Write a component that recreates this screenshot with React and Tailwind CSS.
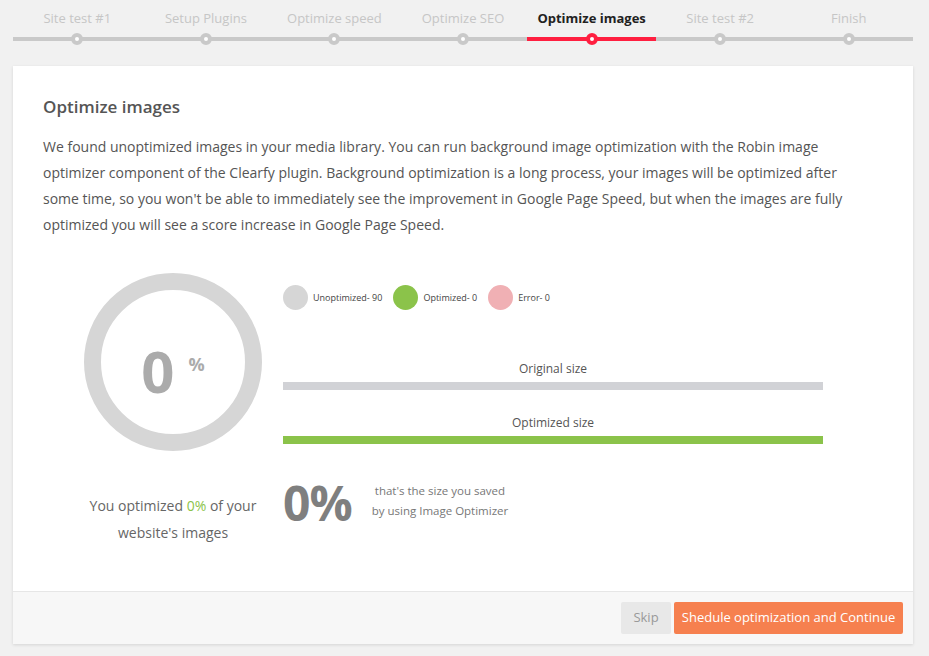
import React from "react";

const steps = ["Site test #1", "Setup Plugins", "Optimize speed", "Optimize SEO", "Optimize images", "Site test #2", "Finish"];
const ACTIVE = 4;

function Step({ label, active }) {
  return (
    <div className="flex-1 flex flex-col items-center">
      <div className={`h-[22px] text-[13px] leading-[18px] pt-[9px] box-content ${active ? "font-bold text-[#222]" : "text-[#c6c6c6]"}`}>{label}</div>
      <div className="relative w-full h-[16px] flex items-center">
        <div className={`w-full h-[4px] ${active ? "bg-[#ff1f40]" : "bg-[#c9c9c9]"}`} />
        <div className={`absolute left-1/2 top-1/2 -translate-x-1/2 -translate-y-1/2 w-[12px] h-[12px] rounded-full bg-white border-[4px] ${active ? "border-[#ff1f40]" : "border-[#c9c9c9]"}`} />
      </div>
    </div>
  );
}

export default function App() {
  return (
    <div className="w-[929px] h-[656px] bg-[#f1f1f1] overflow-hidden" style={{ fontFamily: '"Open Sans", "Noto Sans", sans-serif' }}>
      <div className="ml-[13px] w-[900px] flex">
        {steps.map((s, i) => (
          <Step key={s} label={s} active={i === ACTIVE} />
        ))}
      </div>
      <div className="ml-[13px] w-[900px] mt-[19px] bg-white shadow-[0_1px_3px_rgba(0,0,0,0.12)]">
        <div className="px-[30px] pt-[29px] h-[525px]">
          <h2 className="text-[17px] font-semibold text-[#555] leading-[24px]">Optimize images</h2>
          <p className="mt-[15px] text-[14px] leading-[26px] text-[#555]">
            We found unoptimized images in your media library. You can run background image optimization with the Robin image<br />
            optimizer component of the Clearfy plugin. Background optimization is a long process, your images will be optimized after<br />
            some time, so you won't be able to immediately see the improvement in Google Page Speed, but when the images are fully<br />
            optimized you will see a score increase in Google Page Speed.
          </p>
          <div className="flex mt-[35px]">
            <div className="w-[240px] flex flex-col items-center">
              <div className="ml-[20px] w-[178px] h-[178px] rounded-full border-[17px] border-[#d6d6d6] flex items-center justify-center">
                <div className="flex items-center mt-[18px]">
                  <span className="text-[58px] font-bold text-[#ababab] leading-[58px]">0</span>
                  <span className="text-[18px] font-bold text-[#ababab] ml-[14px] -mt-[14px] leading-[20px]">%</span>
                </div>
              </div>
              <div className="ml-[20px] mt-[41px] text-center text-[14px] leading-[27px] text-[#666]">
                You optimized <span className="text-[#8bc34a]">0%</span> of your<br />website's images
              </div>
            </div>
            <div className="w-[540px]">
              <div className="flex items-center h-[25px] mt-[12px]">
                <span className="w-[25px] h-[25px] rounded-full bg-[#d6d6d6]" />
                <span className="ml-[5px] text-[9px] text-[#444]">Unoptimized- 90</span>
                <span className="ml-[11px] w-[25px] h-[25px] rounded-full bg-[#8bc34a]" />
                <span className="ml-[5px] text-[9px] text-[#444]">Optimized- 0</span>
                <span className="ml-[11px] w-[25px] h-[25px] rounded-full bg-[#f0b0b4]" />
                <span className="ml-[5px] text-[9px] text-[#444]">Error- 0</span>
              </div>
              <div className="mt-[51px] text-center text-[12px] leading-[16px] text-[#555]">Original size</div>
              <div className="mt-[5px] h-[8px] bg-[#d1d2d6]" />
              <div className="mt-[25px] text-center text-[12px] leading-[16px] text-[#555]">Optimized size</div>
              <div className="mt-[5px] h-[8px] bg-[#8bc34a]" />
              <div className="mt-[32px] flex items-center">
                <span className="text-[48px] font-bold text-[#7f7f7f] leading-[54px] tracking-[-1px]">0%</span>
                <div className="ml-[20px] text-center text-[11.5px] leading-[20px] text-[#777] -mt-[4px]">
                  that's the size you saved<br />by using Image Optimizer
                </div>
              </div>
            </div>
          </div>
        </div>
        <div className="h-[53px] bg-[#f7f7f7] border-t border-[#e6e6e6] flex items-center justify-end pr-[10px] gap-[3px]">
          <button className="h-[32px] w-[50px] bg-[#e8e8e8] text-[#999] text-[13px] rounded-[2px]">Skip</button>
          <button className="h-[32px] w-[229px] bg-[#f6804f] text-white text-[13px] rounded-[2px]">Shedule optimization and Continue</button>
        </div>
      </div>
    </div>
  );
}
